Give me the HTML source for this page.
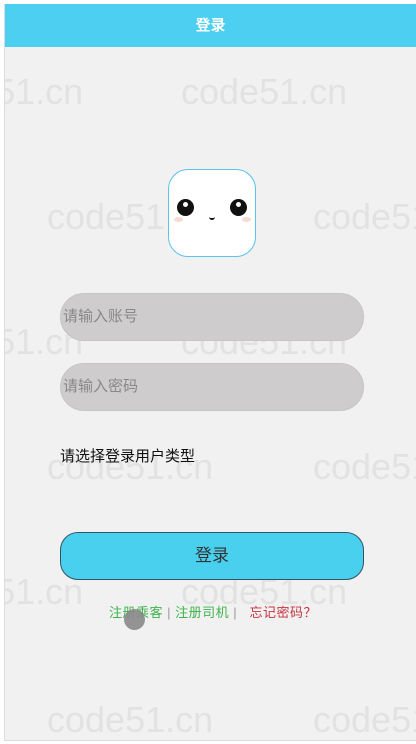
<!DOCTYPE html>
<html><head><meta charset="utf-8"><style>
*{margin:0;padding:0;box-sizing:border-box}
html,body{width:416px;height:744px;overflow:hidden}
body{background:#fff;font-family:"Liberation Sans","Noto Sans CJK SC",sans-serif;position:relative}
.page{position:absolute;left:4px;top:4px;width:412px;height:737px;background:#f2f1f2;border-left:1px solid #dcdcdc;border-bottom:1px solid #dcdcdc;overflow:hidden}
.hdr{position:absolute;left:5px;top:4px;width:411px;height:43px;background:#4ccff0;color:#fff;font-weight:bold;font-size:15px;text-align:center;line-height:43px}
.wm{position:absolute;font-size:36px;color:#e3e2e3;font-family:"Liberation Sans",sans-serif;line-height:36px;white-space:nowrap}
.av{position:absolute;left:168px;top:169px;width:88px;height:88px;border:1px solid #5bc3ea;border-radius:20px;background:#fff}
.eye{position:absolute;width:17px;height:17px;border-radius:50%;background:#111}
.eye::after{content:"";position:absolute;left:6px;top:3px;width:5px;height:5px;border-radius:50%;background:#fff}
.blush{position:absolute;width:9px;height:5px;border-radius:50%;background:#f6dcd0}
.inp{position:absolute;left:60px;width:304px;height:48px;border-radius:24px;background:#cfcccd;border:1px solid #c7c4c5;color:#888;font-size:15px;line-height:46px;padding-left:2px}
.btn{position:absolute;left:60px;top:532px;width:304px;height:48px;border-radius:18px;background:#4ad0ef;border:1px solid #2f5563;color:#333;font-size:17px;text-align:center;line-height:45px}
</style></head><body>
<div class="page">
<div class="wm" style="left:-88px;top:70px">code51.cn</div>
<div class="wm" style="left:176px;top:70px">code51.cn</div>
<div class="wm" style="left:42px;top:195px">code51.cn</div>
<div class="wm" style="left:308px;top:195px">code51.cn</div>
<div class="wm" style="left:-88px;top:320px">code51.cn</div>
<div class="wm" style="left:176px;top:320px">code51.cn</div>
<div class="wm" style="left:42px;top:445px">code51.cn</div>
<div class="wm" style="left:308px;top:445px">code51.cn</div>
<div class="wm" style="left:-88px;top:570px">code51.cn</div>
<div class="wm" style="left:176px;top:570px">code51.cn</div>
<div class="wm" style="left:42px;top:698px">code51.cn</div>
<div class="wm" style="left:308px;top:698px">code51.cn</div>
</div>
<div class="hdr">登录</div>
<div class="av">
 <div class="eye" style="left:8px;top:29px"></div>
 <div class="eye" style="left:61px;top:29px"></div>
 <div class="blush" style="left:5px;top:47px"></div>
 <div class="blush" style="left:73px;top:47px"></div>
 <div style="position:absolute;left:40px;top:46px;width:6px;height:4px;border-bottom:2px solid #111;border-radius:0 0 4px 4px"></div>
</div>
<div class="inp" style="top:293px">请输入账号</div>
<div class="inp" style="top:363px">请输入密码</div>
<div style="position:absolute;left:60px;top:445px;font-size:15px;color:#111">请选择登录用户类型</div>
<div class="btn">登录</div>
<div style="position:absolute;left:109px;top:602px;font-size:13px;letter-spacing:0.5px;color:#3cb44a;white-space:nowrap">注册乘客 <span style="color:#999">|</span> 注册司机<span style="color:#999"> | </span>&nbsp; <span style="color:#c4333f">忘记密码？</span></div>
<div style="position:absolute;left:124px;top:609px;width:21px;height:21px;border-radius:50%;background:#888;opacity:.9"></div>
</body></html>
